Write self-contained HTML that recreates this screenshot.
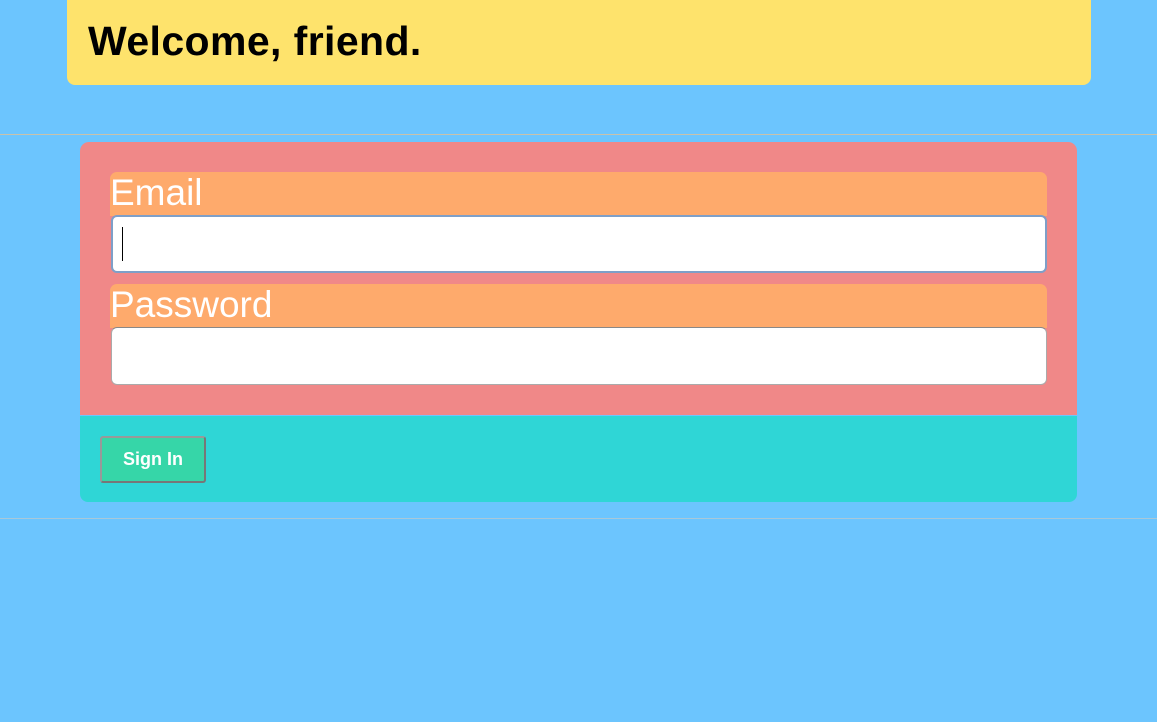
<!DOCTYPE html>
<html><head><style>
body{margin:0;width:1157px;height:722px;background:#6cc5fe;font-family:"Liberation Sans",sans-serif;position:relative;overflow:hidden}
.a{position:absolute}
</style></head><body>
<div class="a" style="left:67px;top:-10px;width:1024px;height:95px;background:#fee36c;border-radius:8px"></div>
<div class="a" style="left:88px;top:18px;font-size:41px;font-weight:bold;color:#000;letter-spacing:0.4px">Welcome, friend.</div>
<div class="a" style="left:0;top:134px;width:1157px;height:1px;background:#c9c2aa"></div>
<div class="a" style="left:80px;top:142px;width:997px;height:273px;background:#f08888;border-radius:9px 9px 0 0"></div>
<div class="a" style="left:110px;top:172px;width:937px;height:44px;background:#feaa6c;border-radius:7px 7px 0 0"></div>
<div class="a" style="left:110px;top:172px;font-size:37px;color:#fff">Email</div>
<div class="a" style="left:111px;top:215px;width:932px;height:54px;background:#fff;border:2px solid #7e9fc8;border-radius:6px"></div>
<div class="a" style="left:122px;top:227px;width:1px;height:34px;background:#000"></div>
<div class="a" style="left:110px;top:284px;width:937px;height:44px;background:#feaa6c;border-radius:7px 7px 0 0"></div>
<div class="a" style="left:110px;top:284px;font-size:37px;color:#fff">Password</div>
<div class="a" style="left:111px;top:327px;width:934px;height:56px;background:#fff;border:1px solid #aaa;border-top-color:#888;border-radius:6px"></div>
<div class="a" style="left:80px;top:416px;width:997px;height:86px;background:#2fd6d6;border-radius:0 0 8px 8px"></div>
<div class="a" style="left:100px;top:436px;width:102px;height:43px;background:#36d6a8;border:2px solid #999;border-right-color:#777;border-bottom-color:#777;border-radius:3px;color:#fff;font-size:18px;font-weight:bold;text-align:center;line-height:43px">Sign In</div>
<div class="a" style="left:0;top:518px;width:1157px;height:1px;background:#a8c8d8"></div>
</body></html>
